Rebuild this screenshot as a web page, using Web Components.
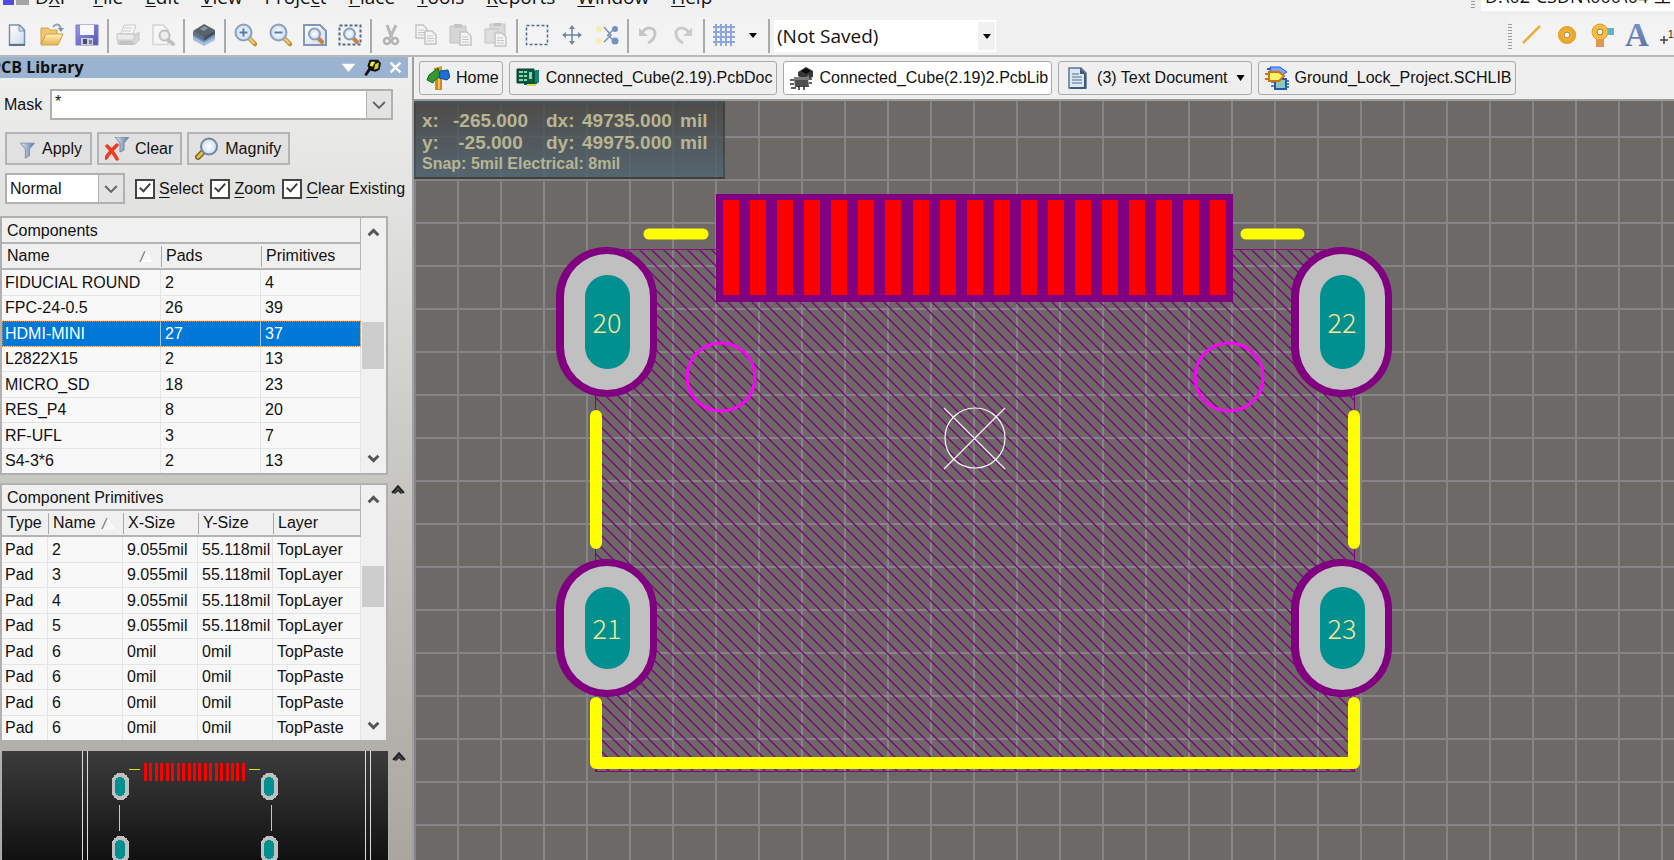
<!DOCTYPE html>
<html lang="en">
<head>
<meta charset="utf-8">
<title>PCB Library</title>
<style>
  html, body { margin: 0; height: 100%; }
  body {
    display: flex;
    flex-direction: column;
    overflow: hidden;
    background: #f0f0f0;
    color: #111;
    font: 16px/20px "Liberation Sans", "Noto Sans CJK SC", sans-serif;
  }
  main { display: flex; flex: 1; min-height: 0; }
  .work { display: flex; flex-direction: column; flex: 1; min-width: 0; border-left: 2px solid #a0a0a0; }
</style>
</head>
<body>

<menu-bar></menu-bar>

<tool-bar>
  <tool-button icon="new" label="New"></tool-button>
  <tool-button icon="open" label="Open"></tool-button>
  <tool-button icon="save" label="Save"></tool-button>
  <tool-sep></tool-sep>
  <tool-button icon="print" label="Print"></tool-button>
  <tool-button icon="preview" label="Print preview"></tool-button>
  <tool-sep></tool-sep>
  <tool-button icon="layers" label="Devices"></tool-button>
  <tool-sep></tool-sep>
  <tool-button icon="zoomin" label="Zoom in"></tool-button>
  <tool-button icon="zoomout" label="Zoom out"></tool-button>
  <tool-button icon="zoomdoc" label="Fit document"></tool-button>
  <tool-button icon="zoomarea" label="Zoom area"></tool-button>
  <tool-sep></tool-sep>
  <tool-button icon="cut" label="Cut"></tool-button>
  <tool-button icon="copy" label="Copy"></tool-button>
  <tool-button icon="paste" label="Paste"></tool-button>
  <tool-button icon="pastes" label="Paste special"></tool-button>
  <tool-sep></tool-sep>
  <tool-button icon="select" label="Select area"></tool-button>
  <tool-button icon="move" label="Move selection"></tool-button>
  <tool-button icon="deselect" label="Deselect"></tool-button>
  <tool-sep></tool-sep>
  <tool-button icon="undo" label="Undo"></tool-button>
  <tool-button icon="redo" label="Redo"></tool-button>
  <tool-sep></tool-sep>
  <tool-button icon="grid" label="Grid"></tool-button>
  <tool-button icon="arrow" label="Grid options" narrow></tool-button>
  <tool-sep></tool-sep>
  <view-select></view-select>
  <tool-button slot="right" icon="line" label="Place line"></tool-button>
  <tool-button slot="right" icon="pad" label="Place pad"></tool-button>
  <tool-button slot="right" icon="via" label="Place via"></tool-button>
  <tool-button slot="right" icon="string" label="Place string"></tool-button>
  <tool-button slot="right" icon="coord" label="Place coordinate"></tool-button>
</tool-bar>

<main>
  <library-panel></library-panel>
  <div class="work">
    <doc-tabs>
      <doc-tab icon="home">Home</doc-tab>
      <doc-tab icon="pcbdoc">Connected_Cube(2.19).PcbDoc</doc-tab>
      <doc-tab icon="pcblib" active>Connected_Cube(2.19)2.PcbLib</doc-tab>
      <doc-tab icon="text" menu>(3) Text Document</doc-tab>
      <doc-tab icon="schlib">Ground_Lock_Project.SCHLIB</doc-tab>
    </doc-tabs>
    <pcb-canvas></pcb-canvas>
  </div>
</main>

<script>
  // ---------- icons, all on a 24x24 box ----------
  const DEFS = `
    <defs>
      <linearGradient id="fold" x1="0" y1="0" x2="0" y2="1"><stop offset="0" stop-color="#fff0b8"/><stop offset="1" stop-color="#e8b34a"/></linearGradient>
      <linearGradient id="page" x1="0" y1="0" x2="1" y2="1"><stop offset="0" stop-color="#fff"/><stop offset="1" stop-color="#cfdcec"/></linearGradient>
      <linearGradient id="disk" x1="0" y1="0" x2="1" y2="1"><stop offset="0" stop-color="#9a98e6"/><stop offset="1" stop-color="#5553b4"/></linearGradient>
      <linearGradient id="fun" x1="0" y1="0" x2="1" y2="0"><stop offset="0" stop-color="#e4ecf7"/><stop offset="1" stop-color="#58749c"/></linearGradient>
      <radialGradient id="lens"><stop offset="0" stop-color="#fff"/><stop offset="1" stop-color="#c4dcf6"/></radialGradient>
      <radialGradient id="gold"><stop offset="0" stop-color="#ffdf70"/><stop offset="1" stop-color="#eba62c"/></radialGradient>
      <linearGradient id="letter" x1="0" y1="0" x2="0" y2="1"><stop offset="0" stop-color="#7a9ad8"/><stop offset="1" stop-color="#5b6c9a"/></linearGradient>
    </defs>`;

  const ZOOM = `<path d="M16 15l6 6" stroke="#b98a34" stroke-width="4.500" stroke-linecap="round"/><path d="M16 15l5 5" stroke="#f0c86c" stroke-width="2.500" stroke-linecap="round"/><circle cx="10.500" cy="9.500" r="8" fill="url(#lens)" stroke="#8f9fb6" stroke-width="2"/>`;
  const SMALLZOOM = `<path d="M15 15l4 4" stroke="#c9803a" stroke-width="4" stroke-linecap="round"/><circle cx="11.500" cy="11" r="5.500" fill="url(#lens)" stroke="#8f9fb6" stroke-width="2"/>`;
  const GREYPAGE = `<path d="M0 0h7l4 4v9h-11z" fill="#f4f4f4" stroke="#c4c4c4" stroke-width="1.500"/><path d="M2 5h6M2 7.500h7M2 10h7" stroke="#c6c6c6"/>`;

  const ICONS = {
    new: `<path d="M4.500 2h10l5 5v14.500h-15z" fill="url(#page)" stroke="#7b91ae" stroke-width="1.500"/><path d="M14 2v6h5.500z" fill="#dbe5f1" stroke="#7b91ae"/><path d="M4 22h16" stroke="#5b7391" stroke-width="2"/>`,
    open: `<path d="M1 5h7l2 2h7v5H6l-5 9z" fill="#f1c96d" stroke="#cfa04c"/><path d="M6 11h17l-5 11H1z" fill="url(#fold)" stroke="#cfa04c"/><path d="M13 4c3-4 7-3 8 2" fill="none" stroke="#8ba0bb" stroke-width="2"/><path d="M17.500 5h6.500l-3 4z" fill="#7e94b1"/>`,
    save: `<path d="M1 2h22v20H1z" fill="url(#disk)" stroke="#7674c4"/><path d="M5 2h14v10H5z" fill="#f6f8fc"/><path d="M6 15h12v7H6z" fill="#c8cbe4"/><path d="M8 16h4v5H8z" fill="#4a4f66"/><path d="M14 17h3v4h-3z" fill="#777f9c"/>`,
    print: `<path d="M8 2h12l-3 9H5z" fill="#f8f8f8" stroke="#c8c8c8"/><path d="M8 5h8M7 8h8" stroke="#cacaca"/><path d="M2 11h18l3-2v8l-4 4H2z" fill="#d6d6d6" stroke="#c4c4c4"/><path d="M1 11h17v6H1z" fill="#ebebeb" stroke="#c8c8c8"/><path d="M4 18h12l3 4H3z" fill="#c2c2c2"/>`,
    preview: `<path d="M2 2h10l5 5v14.500H2z" fill="#f6f6f6" stroke="#d4d4d4" stroke-width="1.500"/><circle cx="13.500" cy="12.500" r="5" fill="#ececec" stroke="#c0c0c0" stroke-width="2"/><path d="M17 17l5 4" stroke="#c0c0c0" stroke-width="4" stroke-linecap="round"/>`,
    layers: `<path d="M1 14l11 6 11-7v4l-11 6-11-6z" fill="#a3bedb"/><path d="M1 11l11 6 11-7v4l-11 6-11-6z" fill="#7b9bbd"/><path d="M1 8v4l11 6V13z" fill="#5f7388"/><path d="M12 13v5l11-7V7z" fill="#43525f"/><path d="M1 8l11-7 11 6-11 7z" fill="#56626d"/><path d="M8 6l4-3 4 2-4 3z" fill="#8b959d"/>`,
    zoomin: ZOOM + `<path d="M6.500 9.500h8M10.500 5.500v8" stroke="#5c77a6" stroke-width="2"/>`,
    zoomout: ZOOM + `<path d="M6.500 9.500h8" stroke="#5c77a6" stroke-width="2"/>`,
    zoomdoc: `<path d="M1 2h16l6 6v14H1z" fill="url(#page)" stroke="#8297b3" stroke-width="2"/>` + SMALLZOOM,
    zoomarea: `<path d="M1.500 2.500h21v19h-21z" fill="none" stroke="#50698c" stroke-width="2" stroke-dasharray="3 2"/>` + SMALLZOOM,
    cut: `<path d="M8 2l5 13M17 2l-6 13" stroke="#b8b8b8" stroke-width="3"/><circle cx="8" cy="18" r="3" fill="none" stroke="#b4b4b4" stroke-width="2.500"/><circle cx="16" cy="18" r="3" fill="none" stroke="#b4b4b4" stroke-width="2.500"/>`,
    copy: `<g transform="translate(2 2)">${GREYPAGE}</g><g transform="translate(11 8)">${GREYPAGE}</g>`,
    paste: `<path d="M1 3h16v17H1z" fill="#d6d6d6" stroke="#c4c4c4"/><path d="M5 1h8v4H5z" fill="#c4c4c4"/><g transform="translate(11 9)">${GREYPAGE}</g>`,
    pastes: `<path d="M6 1h15v15H6z" fill="#dadada" stroke="#c4c4c4"/><path d="M10 0h7v3h-7z" fill="#c2c2c2"/><path d="M1 6h13v14H1z" fill="#dedede" stroke="#c4c4c4"/><g transform="translate(11 10)">${GREYPAGE}</g>`,
    select: `<path d="M1.500 2.500h21v19h-21z" fill="none" stroke="#50698c" stroke-width="1.500" stroke-dasharray="3 2"/>`,
    move: `<path d="M12 4v16M4 12h16" stroke="#6f87a5" stroke-width="1.500"/><path d="M12 2l3 4H9zM12 22l3-4H9zM2 12l4-3v6zM22 12l-4-3v6z" fill="#6f87a5"/>`,
    deselect: `<path d="M9 4l7 8-7 7M20 5l-8 8M13 12l7 7" fill="none" stroke="#7d93b4" stroke-width="1.500"/><circle cx="4" cy="6" r="3" fill="#f3eeab"/><circle cx="4" cy="18" r="3" fill="#f3eeab"/><circle cx="20" cy="6" r="3" fill="#7590c2"/><circle cx="20" cy="18" r="3.500" fill="#7590c2"/>`,
    undo: `<path d="M6 10c4-7 13-6 13 0 0 5-3 8-7 10" fill="none" stroke="#c6c6c6" stroke-width="3"/><path d="M3 5v8h9z" fill="#c6c6c6"/>`,
    redo: `<path d="M18 10c-4-7-13-6-13 0 0 5 3 8 7 10" fill="none" stroke="#cacaca" stroke-width="3"/><path d="M21 5v8h-9z" fill="#cacaca"/>`,
    grid: `<path d="M4 1v22M9 1v22M14 1v22M19 1v22M1 4h22M1 9h22M1 14h22M1 19h22" stroke="#8ca7dc" stroke-width="2"/>`,
    arrow: `<path d="M8 10h8l-4 5z" fill="#000"/>`,
    line: `<path d="M3 20L20 3" stroke="#efab3c" stroke-width="2.500"/>`,
    pad: `<circle cx="12" cy="12" r="6" fill="#fff8ee" stroke="url(#gold)" stroke-width="6"/><circle cx="12" cy="12" r="8.500" fill="none" stroke="#e5a838"/><circle cx="12" cy="12" r="3" fill="#faf0e0" stroke="#a97a34"/>`,
    via: `<path d="M6 14h8v10H6z" fill="#dd9a55"/><path d="M16 5h8v7h-8z" fill="#58b8d4"/><circle cx="10" cy="9" r="8" fill="#f5bd45" stroke="#dda037"/><circle cx="10" cy="9" r="3" fill="#fff3dc" stroke="#a97a34"/>`,
    string: `<text x="0" y="23" font-family="Liberation Serif, serif" font-weight="bold" font-size="33" fill="url(#letter)">A</text>`,
    coord: `<path d="M0 17h8M4 13v8" stroke="#444" stroke-width="1.500"/><text x="8" y="15" font-family="Liberation Sans, sans-serif" font-size="10" fill="#222">10</text>`,
    home: `<path d="M9 10h7v14H9z" fill="#c98b22"/><path d="M12 10h2v13h-2z" fill="#f3c04c"/><path d="M8 2l8-2v11H9z" fill="#d8a124"/><path d="M1 14L3 9l9-7 2 8-6 5-1 2z" fill="#31992f" stroke="#17641c"/><path d="M14 5l8-1 2 7-3 3-8-2z" fill="#1d6fd2" stroke="#164b93"/>`,
    pcbdoc: `<path d="M8 5h15v11l-4 3H8z" fill="#0b6a50"/><path d="M1 3h17v14H1z" fill="#0a5b43" stroke="#083c32"/><path d="M3 5h4v2H3zM8 5h3v2H8zM3 9h4v2H3zM8 9h3v2H8zM3 13h4v2H3zM8 13h3v2H8zM13 6h3v7h-3z" fill="#8fd3a8"/><path d="M11 18h9v2h-9z" fill="#d9d93a"/><path d="M19 4h4v12h-4z" fill="#17876c"/>`,
    pcblib: `<path d="M8 6l8-5 7 4v6l-8 3-7-4z" fill="#383838"/><path d="M11 5l5-3 5 3-5 3z" fill="#0e0e0e"/><path d="M4 12h14l1 9H5z" fill="#4f4f4f"/><path d="M4 11h12l3-2v5H4z" fill="#7c7c7c"/><path d="M0 14h4M0 18h4M1 22h5M9 20v4M14 20v4M19 17h3M19 13h3" stroke="#2b2b2b" stroke-width="1.500"/>`,
    text: `<path d="M4 2h12l5 5v15H4z" fill="#dce7f2" stroke="#5d7690" stroke-width="1.500"/><path d="M15 2v6h6z" fill="#3c5b7c"/><path d="M7 8h7M7 11h10M7 14h10M7 17h10" stroke="#7e97b1" stroke-width="1.500"/><path d="M20 8v14H5" fill="none" stroke="#3c5b7c" stroke-width="2"/>`,
    schlib: `<path d="M5 1h10l7 5-6 4H5z" fill="#7da7f2" stroke="#2d5ed0"/><path d="M2 3h4M2 8h4" stroke="#2d5ed0" stroke-width="2"/><path d="M10 13h11v10H10z" fill="#8cc8bb" stroke="#2459b0" stroke-width="2"/><path d="M6 16h4M6 20h4M21 15h3M21 18h3M21 21h3" stroke="#2459b0" stroke-width="1.500"/><path d="M4 6h10l5 4-5 5H4z" fill="#fff36a" stroke="#cc7414" stroke-width="2"/><path d="M0 8h4M0 13h4" stroke="#cc7414" stroke-width="2"/>`,
    funnel: `<path d="M4 5h17l-6 7v8l-5 3V12z" fill="url(#fun)" stroke="#7088aa"/>`,
    clear: `<path d="M10 0h14l-5 6v7l-4 2V6z" fill="url(#fun)" stroke="#7088aa"/><path d="M2 9c3 3 7 7 10 13M12 8C8 12 4 16 1 21" stroke="#ee3a20" stroke-width="3.500" stroke-linecap="round" fill="none"/>`,
    magnify: `<path d="M7 16l-4 4" stroke="#7d6414" stroke-width="6" stroke-linecap="round"/><path d="M7 16l-4 4" stroke="#e3bf4e" stroke-width="3" stroke-linecap="round"/><circle cx="14" cy="9.500" r="8" fill="url(#lens)" stroke="#75859c" stroke-width="2"/>`,
    pin: `<path d="M8 1h12l4 5-2 9-6 3-9-2-2-7z" fill="#111"/><path d="M10 4h6l-4 7-4-2z" fill="#f5ef3a"/><path d="M16 7l5-2-1 8-6 2z" fill="#dad221"/><path d="M8 14l-6 9" stroke="#111" stroke-width="4"/>`,
    close: `<path d="M3 3l18 18M21 3L3 21" stroke="#fff" stroke-width="4.500"/>`,
    down: `<path d="M1 6h22L12 19z" fill="#fff"/>`,
    up: `<path d="M3 17l9-9 9 9" fill="none" stroke="#555" stroke-width="5.500"/>`,
    fold: `<path d="M2 17L12 6l10 11" fill="none" stroke="#222" stroke-width="4"/><path d="M6 18l6-6 6 6" fill="none" stroke="#222" stroke-width="3"/>`,
    dn: `<path d="M3 7l9 9 9-9" fill="none" stroke="#555" stroke-width="5.500"/>`,
    chev: `<path d="M2 7l10 10L22 7" fill="none" stroke="#666" stroke-width="3.500"/>`
  };

  class UiIcon extends HTMLElement {
    connectedCallback() {
      const size = this.getAttribute('size') || 24;
      const shadow = this.attachShadow({ mode: 'open' });
      shadow.innerHTML = `
        <style>:host { display: block; flex: none; } svg { display: block; }</style>
        <svg width="${size}" height="${size}" viewBox="0 0 24 24" fill="none" aria-hidden="true">${DEFS}${ICONS[this.getAttribute('name')]}</svg>`;
    }
  }
  customElements.define('ui-icon', UiIcon);

  // ---------- menu row ----------
  class MenuBar extends HTMLElement {
    connectedCallback() {
      const menus = [['D', 'X', 'P'], ['', 'F', 'ile'], ['', 'E', 'dit'], ['', 'V', 'iew'], ['Proje', 'c', 't'],
                     ['', 'P', 'lace'], ['', 'T', 'ools'], ['', 'R', 'eports'], ['', 'W', 'indow'], ['', 'H', 'elp']];
      const shadow = this.attachShadow({ mode: 'open' });
      shadow.innerHTML = `
        <style>
          :host { display: flex; justify-content: space-between; align-items: flex-end; height: 17px; overflow: hidden; background: #f0f0f0; }
          nav { display: flex; align-items: flex-end; gap: 22px; padding: 0 0 8px 3px; }
          .logo { display: flex; gap: 2px; margin-right: -16px; padding-bottom: 4px; }
          .logo i { width: 11px; height: 20px; background: #4f4be0; }
          .logo i + i { width: 13px; background: #a3a3a3; }
          button { border: 0; padding: 0; background: none; color: #111; font: 19px/24px "Open Sans", sans-serif; }
          u { text-underline-offset: 2px; }
          .path { display: flex; align-items: flex-end; gap: 6px; width: 203px; padding-bottom: 6px; }
          .path i { width: 4px; height: 20px; margin-bottom: 3px; background: repeating-linear-gradient(0deg, #999 0 1px, transparent 1px 3px); }
          input { flex: 1; min-width: 0; box-sizing: border-box; height: 32px; border: 0; padding: 0 4px; background: #fff; color: #111; font: 18px/30px "Open Sans", "Noto Sans CJK SC", sans-serif; }
        </style>
        <nav>
          <span class="logo"><i></i><i></i></span>
          ${menus.map(m => `<button type="button">${m[0]}<u>${m[1]}</u>${m[2]}</button>`).join('')}
        </nav>
        <div class="path"><i></i><input aria-label="Path" value="D:\\02-CSDN\\000\\04-工"></div>`;
    }
  }
  customElements.define('menu-bar', MenuBar);

  // ---------- toolbar ----------
  class ToolBar extends HTMLElement {
    connectedCallback() {
      const shadow = this.attachShadow({ mode: 'open' });
      shadow.innerHTML = `
        <style>
          :host { display: flex; height: 40px; overflow: hidden; border-bottom: 2px solid #b9b9b9; background: #f0f0f0; box-sizing: border-box; }
          .left { display: flex; align-items: center; background: #f3f3f3; }
          .right { display: flex; align-items: center; margin-left: auto; margin-right: -16px; background: #f3f3f3; }
          .grip { width: 4px; height: 26px; margin-right: 3px; background: repeating-linear-gradient(0deg, #999 0 1px, transparent 1px 3px); }
        </style>
        <div class="left"><slot></slot></div>
        <div class="right"><span class="grip"></span><slot name="right"></slot></div>`;
    }
  }
  customElements.define('tool-bar', ToolBar);

  class ToolButton extends HTMLElement {
    connectedCallback() {
      const shadow = this.attachShadow({ mode: 'open' });
      shadow.innerHTML = `
        <style>
          :host { display: block; width: 35px; }
          :host([narrow]) { width: 24px; }
          button { display: flex; align-items: center; justify-content: center; width: 100%; height: 36px; border: 0; padding: 0 2px 2px 0; background: none; }
        </style>
        <button type="button" aria-label="${this.getAttribute('label')}"><ui-icon name="${this.getAttribute('icon')}"></ui-icon></button>`;
    }
  }
  customElements.define('tool-button', ToolButton);

  class ToolSep extends HTMLElement {
    connectedCallback() {
      const shadow = this.attachShadow({ mode: 'open' });
      shadow.innerHTML = `<style>:host { display: block; width: 2px; height: 34px; margin: 0 2px; background: #aaa; }</style>`;
    }
  }
  customElements.define('tool-sep', ToolSep);

  class ViewSelect extends HTMLElement {
    connectedCallback() {
      const shadow = this.attachShadow({ mode: 'open' });
      shadow.innerHTML = `
        <style>
          :host { display: grid; grid-template-columns: 204px 18px; align-items: center; height: 32px; margin-left: 2px; background: #fff; }
          select { grid-area: 1 / 1 / 2 / 3; appearance: none; height: 32px; border: 0; padding: 0 3px; background: none; color: #111; font: 19px/30px "Open Sans", sans-serif; }
          span { grid-area: 1 / 2; display: flex; justify-content: center; align-items: center; height: 28px; margin-right: 1px; background: #f1f1f1; pointer-events: none; }
        </style>
        <span><ui-icon name="arrow" size="24"></ui-icon></span>
        <select aria-label="Saved view"><option>(Not Saved)</option></select>`;
    }
  }
  customElements.define('view-select', ViewSelect);

  // ---------- document tabs ----------
  class DocTabs extends HTMLElement {
    connectedCallback() {
      const shadow = this.attachShadow({ mode: 'open' });
      shadow.innerHTML = `
        <style>
          :host { display: flex; gap: 6px; padding: 4px 5px; height: 44px; box-sizing: border-box; border-bottom: 2px solid #9b9b9b; background: #efefef; }
        </style>
        <slot></slot>`;
    }
  }
  customElements.define('doc-tabs', DocTabs);

  class DocTab extends HTMLElement {
    connectedCallback() {
      const shadow = this.attachShadow({ mode: 'open' });
      shadow.innerHTML = `
        <style>
          :host { display: block; }
          button { display: flex; align-items: center; gap: 6px; height: 34px; border: 1px solid #aaa; border-radius: 3px; padding: 0 3px 0 6px; background: #efefef; color: #111; font: inherit; white-space: nowrap; }
          :host([active]) button { background: #fff; }
          :host([menu]) button { gap: 8px; }
          .menu { display: block; width: 8px; height: 6px; margin: 0 3px 0 1px; background: #000; clip-path: polygon(0 0, 100% 0, 50% 100%); }
        </style>
        <button type="button"><ui-icon name="${this.getAttribute('icon')}"></ui-icon><slot></slot>${this.hasAttribute('menu') ? '<span class="menu"></span>' : ''}</button>`;
    }
  }
  customElements.define('doc-tab', DocTab);

  // ---------- panel controls ----------
  class PushButton extends HTMLElement {
    connectedCallback() {
      const shadow = this.attachShadow({ mode: 'open' });
      shadow.innerHTML = `
        <style>
          :host { display: block; }
          button { display: flex; align-items: center; gap: 6px; height: 33px; box-sizing: border-box; border: 2px solid #b4b4b4; padding: 0 7px 0 6px; background: #e1e1e1; color: #111; font: inherit; }
          :host([wide]) button { gap: 5px; padding: 0 8px 0 10px; }
        </style>
        <button type="button"><ui-icon name="${this.getAttribute('icon')}" size="${this.hasAttribute('wide') ? 20 : 24}"></ui-icon><slot></slot></button>`;
    }
  }
  customElements.define('push-button', PushButton);

  class CheckBox extends HTMLElement {
    connectedCallback() {
      const text = this.getAttribute('label');
      const shadow = this.attachShadow({ mode: 'open' });
      shadow.innerHTML = `
        <style>
          :host { display: block; white-space: nowrap; }
          label { display: flex; align-items: center; gap: 4px; }
          input {
            appearance: none; width: 20px; height: 20px; margin: 0; border: 2px solid #444; background: #fff;
          }
          input:checked::before {
            content: ""; display: block; width: 4px; height: 9px; margin: 0 0 0 5px;
            border: solid #444; border-width: 0 2px 2px 0; transform: rotate(42deg);
          }
          u { text-underline-offset: 3px; }
        </style>
        <label><input type="checkbox" checked><span><u>${text[0]}</u>${text.slice(1)}</span></label>`;
    }
  }
  customElements.define('check-box', CheckBox);

  const LISTS = {
    components: {
      caption: 'Components', sort: 0, selected: 2, thumb: [83, 47],
      cols: [['Name', 159], ['Pads', 100], ['Primitives', 100]],
      rows: [
        ['FIDUCIAL ROUND', 2, 4], ['FPC-24-0.5', 26, 39], ['HDMI-MINI', 27, 37], ['L2822X15', 2, 13],
        ['MICRO_SD', 18, 23], ['RES_P4', 8, 20], ['RF-UFL', 3, 7], ['S4-3*6', 2, 13]
      ]
    },
    primitives: {
      caption: 'Component Primitives', sort: 1, selected: -1, thumb: [60, 41],
      cols: [['Type', 46], ['Name', 75], ['X-Size', 75], ['Y-Size', 75], ['Layer', 88]],
      rows: [2, 3, 4, 5].map(n => ['Pad', n, '9.055mil', '55.118mil', 'TopLayer'])
        .concat([6, 6, 6, 6].map(n => ['Pad', n, '0mil', '0mil', 'TopPaste']))
    }
  };
  const SORT = '<svg width="13" height="11" viewBox="0 0 13 11"><path d="M6 0l6 10H1" fill="#f6f6f6" stroke="#fff" stroke-width="1.500"/><path d="M1 11L6 0" stroke="#8c8c8c" stroke-width="1.500"/></svg>';

  class DataList extends HTMLElement {
    connectedCallback() {
      const { caption, cols, rows, selected, thumb, sort } = LISTS[this.getAttribute('source')];
      const head = cols.map((c, i) => `<th scope="col"><span>${c[0]}</span>${i === sort ? SORT : ''}</th>`).join('');
      const body = rows.map((r, i) => `<tr${i === selected ? ' class="selected"' : ''}>${r.map(t => `<td>${t}</td>`).join('')}</tr>`).join('');
      const shadow = this.attachShadow({ mode: 'open' });
      shadow.innerHTML = `
        <style>
          :host { display: flex; box-sizing: border-box; width: 388px; border: 2px solid #b0b0b0; background: #f0f0f0; }
          table { flex: 1; border-collapse: separate; border-spacing: 0; table-layout: fixed; width: 359px; }
          caption { height: 24px; border: solid #b4b4b4; border-width: 0 1px 2px 0; padding-left: 5px; text-align: left; line-height: 25px; }
          th { height: 24px; padding: 0 0 0 5px; border-bottom: 2px solid #b4b4b4; font-weight: normal; text-align: left; line-height: 24px; white-space: nowrap; }
          th + th { background: linear-gradient(#a8a8a8, #a8a8a8) no-repeat 0 2px / 1px 21px; }
          th svg { float: right; margin: 7px 9px 0 0; }
          th:last-child { border-right: 1px solid #b4b4b4; }
          td { height: 24px; padding: 0 0 0 3px; border: solid #e4e4e4; border-width: 0 1px 1px 0; background: #f8f8f8; line-height: 24px; white-space: nowrap; }
          td + td { padding-left: 4px; }
          tr:nth-child(odd) td { height: 25px; }
          tr:last-child td { border-bottom: 0; }
          .selected td { background: #0078d7; color: #fff; border-right-color: #9cc8ee; background-clip: padding-box; }
          .selected { outline: 1px dotted #e08a3c; outline-offset: -1px; }
          .bar { display: flex; flex-direction: column; align-items: center; justify-content: space-between; width: 25px; padding: 8px 0; }
          .thumb { align-self: stretch; margin: ${thumb[0]}px 2px auto 1px; height: ${thumb[1]}px; background: #cdcdcd; }
        </style>
        <table>
          <caption>${caption}</caption>
          <colgroup>${cols.map(c => `<col style="width:${c[1]}px">`).join('')}</colgroup>
          <thead><tr>${head}</tr></thead>
          <tbody>${body}</tbody>
        </table>
        <div class="bar"><ui-icon name="up" size="13"></ui-icon><span class="thumb"></span><ui-icon name="dn" size="13"></ui-icon></div>`;
    }
  }
  customElements.define('data-list', DataList);

  // small view of the selected footprint
  class PcbPreview extends HTMLElement {
    connectedCallback() {
      let bars = '';
      for (let i = 0; i < 19; i++) bars += `<rect x="${Math.round(142 + i * 5.44)}" y="12" width="3" height="18" fill="#f00"/>`;
      const pad = (x, y) => `<rect x="${x}" y="${y}" width="17" height="27" rx="8" fill="#c0c0c0"/><rect x="${x + 3}" y="${y + 4}" width="10" height="19" rx="5" fill="#009090"/>`;
      const shadow = this.attachShadow({ mode: 'open' });
      shadow.innerHTML = `
        <style>
          :host { display: block; overflow: hidden; border: solid #b0b0b0; border-width: 1px 1px 0; background: linear-gradient(#3c3c3c, #111); }
          svg { display: block; }
        </style>
        <svg width="386" height="160" role="img" aria-label="Footprint preview" shape-rendering="crispEdges">
          <path d="M80 0v160M85 0v160M363 0v160M368 0v160" stroke="#ddd" stroke-width="1"/>
          ${bars}
          <path d="M127 18h11M247 18h11M117 54v26M269 54v26" stroke="#e0e000" stroke-width="1"/>
          ${pad(110, 22)}${pad(259, 22)}${pad(110, 85)}${pad(259, 85)}
        </svg>`;
    }
  }
  customElements.define('pcb-preview', PcbPreview);

  class LibraryPanel extends HTMLElement {
    connectedCallback() {
      const shadow = this.attachShadow({ mode: 'open' });
      shadow.innerHTML = `
        <style>
          :host { display: flex; flex-direction: column; flex: none; width: 412px; overflow: hidden; background: linear-gradient(#f0f0ef 0, #e2e2e0 18%, #c8c7c3 52%, #aaa69f 100%); }
          header { display: flex; align-items: center; height: 21px; margin-right: 4px; padding-right: 6px; background: #9ab3d0; }
          h2 { margin: 0 auto 0 -9px; font: bold 16px/21px "Open Sans", sans-serif; }
          header button, .fold { border: 0; padding: 0; background: none; }
          header button { margin-left: 8px; }
          .row { display: flex; align-items: center; margin-left: 5px; }
          .mask { gap: 8px; margin: 11px 19px 0 4px; }
          .mask label { width: 38px; }
          .combo { display: grid; grid-template-columns: 1fr 25px; box-sizing: border-box; height: 31px; border: 2px solid #b0b0b3; background: #fff; }
          .mask .combo { flex: 1; }
          .combo input, .combo select { appearance: none; min-width: 0; border: 0; padding: 0 3px; background: none; color: #111; font: inherit; }
          .combo input { padding-bottom: 6px; }
          .combo select { grid-area: 1 / 1 / 2 / 3; }
          .combo span { grid-area: 1 / 2; display: flex; align-items: center; justify-content: center; border-left: 1px solid #b0b0b3; background: #e3e3e3; pointer-events: none; }
          .level { width: 120px; margin-right: 10px; }
          .checks { display: flex; gap: 7px; }
          .buttons { gap: 5px; margin-top: 12px; }
          .options { margin-top: 8px; margin-bottom: 12px; }
          .block { display: flex; align-items: flex-start; gap: 3px; margin: 0 0 8px; }
          .fold { height: 12px; }
          .block pcb-preview { width: 386px; margin-left: 1px; align-self: stretch; }
          .view { flex: 1; margin: 0; min-height: 0; }
        </style>
        <header>
          <h2>PCB Library</h2>
          <button type="button" aria-label="Panel menu"><ui-icon name="down" size="15"></ui-icon></button>
          <button type="button" aria-label="Pin panel"><ui-icon name="pin" size="17"></ui-icon></button>
          <button type="button" aria-label="Close panel"><ui-icon name="close" size="13"></ui-icon></button>
        </header>
        <div class="row mask">
          <label for="mask">Mask</label>
          <div class="combo"><input id="mask" value="*"><span><ui-icon name="chev" size="14"></ui-icon></span></div>
        </div>
        <div class="row buttons">
          <push-button icon="funnel" wide>Apply</push-button>
          <push-button icon="clear">Clear</push-button>
          <push-button icon="magnify">Magnify</push-button>
        </div>
        <div class="row options">
          <div class="combo level"><span><ui-icon name="chev" size="14"></ui-icon></span><select aria-label="Highlight mode"><option>Normal</option></select></div>
          <div class="checks">
            <check-box label="Select"></check-box>
            <check-box label="Zoom"></check-box>
            <check-box label="Clear Existing"></check-box>
          </div>
        </div>
        <div class="block"><data-list source="components"></data-list></div>
        <div class="block"><data-list source="primitives"></data-list><button class="fold" type="button" aria-label="Fold primitives"><ui-icon name="fold" size="14"></ui-icon></button></div>
        <div class="block view"><pcb-preview></pcb-preview><button class="fold" type="button" aria-label="Fold preview"><ui-icon name="fold" size="14"></ui-icon></button></div>`;
    }
  }
  customElements.define('library-panel', LibraryPanel);

  // ---------- board view, coordinates are relative to the origin mark ----------
  class PcbCanvas extends HTMLElement {
    connectedCallback() {
      let bars = '';
      for (let i = 0; i < 19; i++) bars += `<rect x="${Math.round(-251 + i * 27.08)}" y="-238" width="16" height="95"/>`;

      const pad = (n, x, y, h) => `
        <rect x="${x - 51}" y="${y - h / 2}" width="101" height="${h}" rx="50" fill="#800080"/>
        <rect x="${x - 43}" y="${y - h / 2 + 7}" width="86" height="${h - 14}" rx="43" fill="#c0c0c0"/>
        <rect x="${x - 22}" y="${y - h / 2 + 28}" width="45" height="${h - 56}" rx="22" fill="#009090"/>
        <text x="${x}" y="${y + 11}">${n}</text>`;

      const shadow = this.attachShadow({ mode: 'open' });
      shadow.innerHTML = `
        <style>
          :host { display: grid; flex: 1; min-height: 0; overflow: hidden; background: #6d6967; }
          svg, .hud { grid-area: 1 / 1; }
          svg { display: block; width: 100%; height: 100%; min-height: 0; }
          text { font: 300 27px "Noto Sans CJK JP", sans-serif; fill: #fbe694; text-anchor: middle; }
          .hud {
            place-self: start; box-sizing: border-box; width: 311px; padding: 7px 6px 3px; border: 2px solid #00000030;
            background: linear-gradient(#444240c0, #4f6470d0); color: #b8b592; font-weight: bold;
          }
          dl { display: grid; grid-template-columns: 31px 93px 36px 98px auto; margin: 0; font-size: 19px; line-height: 22px; }
          dd { margin: 0; }
          .abs { width: 75px; text-align: center; }
          .hud p { margin: 0; line-height: 20px; }
        </style>
        <svg role="img" aria-label="HDMI-MINI footprint">
          <defs>
            <pattern id="grid" width="43" height="43" patternUnits="userSpaceOnUse" x="559" y="336">
              <path d="M0 1h43M1 0v43" stroke="#858487" stroke-width="2" shape-rendering="crispEdges"/>
            </pattern>
            <pattern id="hatch" width="12" height="12" patternUnits="userSpaceOnUse" x="10">
              <path d="M-1 -1L13 13M-1 11L1 13M11 -1L13 1" stroke="#800080" stroke-width="1.400"/>
            </pattern>
          </defs>
          <rect width="100%" height="100%" fill="url(#grid)"/>
          <g transform="translate(560 337)">
            <rect x="-379" y="-189" width="759" height="522" fill="url(#hatch)"/>
            <rect x="-379" y="-189" width="759" height="522" fill="none" stroke="#800080" shape-rendering="crispEdges"/>
            <rect x="-258" y="-244" width="517" height="108" fill="#800080"/>
            <g fill="#f00">${bars}</g>
            <g stroke="#ff0" stroke-width="12" stroke-linecap="round" stroke-linejoin="round" fill="none">
              <path d="M-325 -204h54M272 -204h53" stroke-width="11"/>
              <path d="M-378 -22v127M380 -22v127M-378 265v60h758v-60" stroke-width="12"/>
            </g>
            ${pad(20, -367, -116, 150)}
            ${pad(22, 368, -116, 150)}
            ${pad(21, -367, 190, 138)}
            ${pad(23, 368, 190, 138)}
            <g fill="none" stroke="#f0f" stroke-width="3"><circle cx="-253" cy="-61" r="34"/><circle cx="255" cy="-61" r="34"/></g>
            <g fill="none" stroke="#f4f4f4" stroke-width="1.200"><circle cx="1" cy="0" r="30"/><path d="M-30 -30L31 31M31 -30L-30 31"/></g>
          </g>
        </svg>
        <div class="hud">
          <dl>
            <dt>x:</dt><dd class="abs">-265.000</dd><dt>dx:</dt><dd>49735.000</dd><dd>mil</dd>
            <dt>y:</dt><dd class="abs">-25.000</dd><dt>dy:</dt><dd>49975.000</dd><dd>mil</dd>
          </dl>
          <p>Snap: 5mil Electrical: 8mil</p>
        </div>`;
    }
  }
  customElements.define('pcb-canvas', PcbCanvas);
</script>
</body>
</html>
